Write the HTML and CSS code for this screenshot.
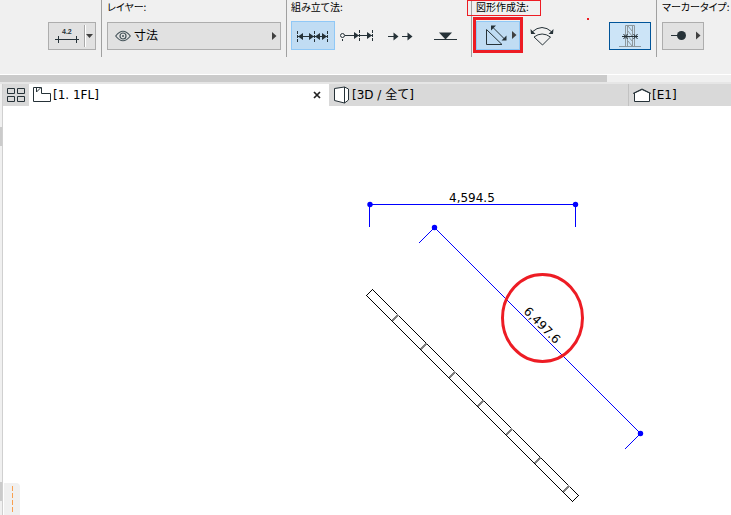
FILE: index.html
```html
<!DOCTYPE html>
<html lang="ja">
<head>
<meta charset="utf-8">
<meta name="viewport" content="width=device-width, initial-scale=1">
<title>寸法</title>
<link rel="stylesheet" href="styles.css">
</head>
<body>
<header class="infobox">
  <section class="group group-default">
    <div class="controls">
      <button class="btn btn-boxed btn-split" type="button" aria-label="寸法の設定">
        <svg width="46" height="26" viewBox="0 0 46 26">
          <text class="icon-text" x="13" y="11">4.2</text>
          <path class="ink" d="M6 16.500H30M9.500 13v7M27.500 13v7"/>
          <path d="M35.500 2v22" stroke="#a8a8a8"/><path d="M36.500 2v22" stroke="#fff"/>
          <path class="arrow" d="M37 11h7l-3.500 4z"/>
        </svg>
      </button>
    </div>
  </section>
  <section class="group group-layer">
    <label class="caption" for="layer">レイヤー:</label>
    <div class="controls">
      <div class="picker">
        <svg class="picker-eye" width="16" height="12" viewBox="0 0 16 12">
          <path d="M.7 6Q8-3.500 15.300 6Q8 15.500.7 6z" fill="none" stroke="#45545a" stroke-width="1.200"/>
          <circle cx="8" cy="6" r="3" fill="none" stroke="#45545a" stroke-width="1.200"/>
          <circle cx="8" cy="6" r="1" fill="#45545a"/>
        </svg>
        <select id="layer" class="picker-select"><option>寸法</option></select>
        <svg class="picker-arrow" width="5" height="8" viewBox="0 0 5 8"><path class="arrow" d="M0 0l4.500 4L0 8z"/></svg>
      </div>
    </div>
  </section>
  <section class="group group-build">
    <span class="caption">組み立て法:</span>
    <div class="controls">
      <button class="btn btn-on" type="button" aria-label="連続寸法">
        <svg width="42" height="28" viewBox="0 0 42 28">
          <path class="ink" d="M6 14.500H36"/>
          <path class="ink dash" d="M5.500 9v11M22.500 9v11M35.500 9v11"/>
          <path class="fill" d="M6 14.500l5-3.500v7zM22 14.500l-5-3.500v7zM23 14.500l5-3.500v7zM35 14.500l-5-3.500v7z"/>
        </svg>
      </button>
      <button class="btn" type="button" aria-label="累進寸法">
        <svg width="42" height="28" viewBox="0 0 42 28">
          <circle class="ink" cx="6.500" cy="13.500" r="2"/>
          <path class="ink" d="M9 13.500H36"/>
          <path class="ink dash" d="M6.500 17v2M23.500 8v11M36.500 8v11"/>
          <path class="fill" d="M23 13.500l-5-3.500v7zM36 13.500l-5-3.500v7z"/>
        </svg>
      </button>
      <button class="btn" type="button" aria-label="座標寸法">
        <svg width="42" height="28" viewBox="0 0 42 28">
          <path class="ink" d="M8 14.500h7M22 14.500h7"/>
          <path class="fill" d="M18.500 14.500l-5-4v8zM32.500 14.500l-5-4v8z"/>
        </svg>
      </button>
      <button class="btn" type="button" aria-label="高さ寸法">
        <svg width="42" height="28" viewBox="0 0 42 28">
          <path class="ink" d="M10 17.500h23"/><path class="fill" d="M15 10.500h13l-6.500 7z"/>
        </svg>
      </button>
    </div>
  </section>
  <section class="group group-geometry">
    <span class="caption caption-marked">図形作成法:</span>
    <div class="controls">
      <button class="btn btn-on btn-marked" type="button" aria-label="斜め寸法">
        <svg width="42" height="27" viewBox="0 0 42 27">
          <path class="ink" d="M9.500 7.500v15h15.500zM16 5.500l12 12"/>
          <path class="fill" d="M14 3.500h5l-5 5zM29.500 18.500h-5l5-5z"/>
          <path class="arrow" d="M35 9l4.500 4-4.500 4z"/>
        </svg>
      </button>
      <button class="btn" type="button" aria-label="円弧寸法">
        <svg width="42" height="28" viewBox="0 0 42 28">
          <path class="ink" d="M11 10q10-9 20 0M13 15q8-6 16.500 0L21.500 23z"/>
          <path class="fill" d="M9.500 7l.5 5h4.500zM32.500 7l-.5 5h-4.500z"/>
        </svg>
      </button>
      <button class="btn btn-static" type="button" aria-label="固定寸法">
        <svg width="40" height="26" viewBox="0 0 40 26">
          <path d="M9 23.500h22M15.500 23.500v-21h9v21M17.500 3v20M22.500 3v20" fill="none" stroke="#8d989e"/>
          <path d="M18 3l4 5M18 8l4 5M18 13l4 5M18 18l4 5" fill="none" stroke="#8d989e"/>
          <path class="ink" d="M12 13.500h16"/>
          <path class="ink" d="M13.500 11l4 5M13.500 16l4-5M23.500 11l4 5M23.500 16l4-5"/>
        </svg>
      </button>
    </div>
    <i class="speck"></i>
  </section>
  <section class="group group-marker">
    <span class="caption">マーカータイプ:</span>
    <div class="controls">
      <button class="btn btn-boxed" type="button" aria-label="マーカータイプ">
        <svg width="40" height="26" viewBox="0 0 40 26">
          <path class="ink" d="M8 12.500h10"/><circle class="fill" cx="18.500" cy="12.500" r="4.500"/>
          <path class="arrow" d="M33 8.500l4.500 4-4.500 4z"/>
        </svg>
      </button>
    </div>
  </section>
</header>
<div class="scroll"><div class="scroll-thumb"></div></div>
<main class="workspace">
  <aside class="rail"><i class="grip"></i><i class="grip"></i></aside>
  <div class="view">
    <nav class="tabs">
      <button class="overview" type="button" aria-label="タブ一覧">
        <svg width="18" height="14" viewBox="0 0 18 14"><path class="ink" d="M.5.5h7v5h-7zM10.500.5h7v5h-7zM.5 8.500h7v5h-7zM10.500 8.500h7v5h-7z"/></svg>
      </button>
      <div class="tab tab-active">
        <svg width="19" height="16" viewBox="0 0 19 16"><path class="ink" d="M.5.5h8v6h9v8H.5zM3.500 1v4l4-4"/></svg>
        <a class="tab-link" href="#floor">[1. 1FL]</a>
        <button class="close" type="button" aria-label="閉じる">
          <svg width="8" height="8" viewBox="0 0 8 8"><path d="M1 1l6 6M7 1L1 7" stroke="#222" stroke-width="1.700"/></svg>
        </button>
      </div>
      <div class="tab">
        <svg width="18" height="18" viewBox="0 0 18 18"><path d="M1 3l10-2 5 2v11l-5 3-10-3z" fill="#fff"/><path class="ink" d="M1.500 2.500L11.500 1v16l-10-2.500zM11.500 1l4 2v11l-4 3"/></svg>
        <a class="tab-link" href="#model">[3D / 全て]</a>
      </div>
      <div class="tab tab-last">
        <svg width="18" height="14" viewBox="0 0 18 14"><path class="ink" d="M1.500 5v8.500h15V5L9 1.500z" fill="#fff"/><path class="ink" d="M0 5.500L9 1l9 4.500"/></svg>
        <a class="tab-link" href="#elevation">[E1]</a>
      </div>
    </nav>
    <div class="canvas">
      <svg class="drawing" role="img" aria-label="図面">
        <g transform="translate(-3 -106)">
          <g class="wall">
            <path d="M372.500 289.500L366.500 295.500L572.500 501.500L578.500 495.500z"/>
            <path class="joint" d="M392 321l6-6M420.500 349.500l6-6M449 378l6-6M477.500 406.500l6-6M506 435l6-6M534.500 463.500l6-6M563 492l6-6"/>
          </g>
          <g class="dimension">
            <path d="M370 204.500H576M369.500 204v23M575.500 204v23"/>
            <path d="M419 243l15.500-15.500L640.500 433.500L625 449"/>
          </g>
          <g class="nodes">
            <circle cx="370" cy="204.500" r="2.700"/><circle cx="575.500" cy="204.500" r="2.700"/>
            <circle cx="434.500" cy="227.500" r="2.700"/><circle cx="640.500" cy="433.500" r="2.700"/>
          </g>
          <text class="measure" x="449" y="202">4,594.5</text>
          <text class="measure" transform="translate(523 312) rotate(45)">6,497.6</text>
          <ellipse class="ring" cx="542.500" cy="318" rx="40" ry="43.500"/>
        </g>
      </svg>
      <div class="palette"><i class="dash-mark"></i><i class="dash-mark"></i><i class="dash-mark"></i><i class="dash-mark"></i></div>
    </div>
  </div>
</main>
</body>
</html>
```
FILE: styles.css
```css
* { box-sizing: border-box; }
html, body { height: 100%; margin: 0; }
body {
  display: flex;
  flex-direction: column;
  overflow: hidden;
  background: #f0f0f0;
  color: #000;
  font-family: "DejaVu Sans", "Noto Sans CJK JP", sans-serif;
  font-size: 12px;
}
button { padding: 0; border: 0; background: none; font: inherit; }
svg { display: block; flex: none; }

.ink { fill: none; stroke: #263238; }
path.ink[fill] { fill: #fff; }
.dash { stroke-dasharray: 3 1; }
.fill { fill: #263238; }
.arrow { fill: #404040; }
.icon-text { font: bold 7px "Liberation Sans", sans-serif; fill: #263238; }

/* Info box */
.infobox { display: flex; padding-bottom: 17px; border-bottom: 1px solid #fff; }
.group {
  position: relative;
  display: flex;
  flex: none;
  flex-direction: column;
  justify-content: flex-end;
  height: 57px;
  padding: 0 5px 7px;
  border-right: 1px solid #a0a0a0;
}
.group-default { padding-left: 48px; }
.group-layer { width: 185px; }
.group-build { padding-left: 4px; padding-right: 4px; }
.group-geometry { width: 185px; padding-left: 4px; }
.group-marker { flex: 1; min-width: 0; padding-right: 0; border-right: 0; }
.caption {
  position: relative;
  height: 14px;
  margin-bottom: auto;
  font: 10px/14px "Noto Sans CJK JP", sans-serif;
  font-feature-settings: "palt";
  white-space: nowrap;
}
.caption-marked::after {
  content: "";
  position: absolute;
  left: -9px;
  top: 0;
  width: 72px;
  height: 14px;
  border: 1px solid #ed1c24;
}
.controls { display: flex; align-items: flex-end; }
.btn {
  display: grid;
  place-items: center;
  width: 44px;
  height: 29px;
}
.btn-boxed { width: 42px; height: 28px; border: 1px solid #adadad; background: #e1e1e1; }
.btn-split { width: 48px; }
.btn-on { border: 1px solid #90c8f6; background: #c0dcf3; }
.btn-marked { position: relative; }
.btn-marked::after {
  content: "";
  position: absolute;
  inset: -5px -4px -4px;
  border: 3px solid #ed1c24;
}
.btn-static { width: 42px; height: 28px; margin-left: auto; border: 1px solid #005499; background: #cce4f7; }
.speck { position: absolute; right: 67px; top: 18px; width: 2px; height: 2px; background: #ed1c24; }

.picker {
  display: flex;
  align-items: center;
  width: 100%;
  height: 28px;
  padding: 0 3px 0 7px;
  border: 1px solid #adadad;
  background: #e1e1e1;
}
.picker-select {
  flex: 1;
  min-width: 0;
  height: 26px;
  padding: 0 3px;
  border: 0;
  appearance: none;
  background: none;
  color: inherit;
  font: inherit;
}

.scroll { height: 9px; border-bottom: 2px solid #e6e6e6; }
.scroll-thumb { width: 83%; height: 7px; background: #cbcbcb; }

/* Workspace */
.workspace { display: flex; flex: 1; min-height: 0; }
.rail {
  display: flex;
  flex-direction: column;
  justify-content: space-between;
  width: 3px;
  padding: 43px 0 14px;
  border-right: 1px solid #d0d0d0;
}
.grip { width: 2px; height: 19px; background: #cbcbcb; }
.view { display: flex; flex: 1; flex-direction: column; min-width: 0; }
.tabs { display: grid; grid-template-columns: 26px 300px 300px 1fr; height: 22px; background: #d9d9d9; }
.overview { display: grid; place-items: center; }
.tab { display: flex; align-items: center; gap: 1px; padding: 0 8px 0 4px; border-right: 1px solid #c2c2c2; }
.tab-active { border-right: 0; background: #fff; }
.tab-last { border-right: 0; }
.tab-link { color: inherit; line-height: 20px; text-decoration: none; white-space: nowrap; }
.close { margin-left: auto; }

.canvas { position: relative; flex: 1; min-height: 0; background: #fff; }
.drawing { width: 100%; height: 100%; }
.wall { fill: none; stroke: #000; shape-rendering: crispEdges; }
.joint { stroke: #808080; stroke-width: 2; }
.dimension { fill: none; stroke: #00f; shape-rendering: crispEdges; }
.nodes { fill: #00f; }
.measure { font-size: 12px; fill: #000; }
.ring { fill: none; stroke: #ed1c24; stroke-width: 3; }
.palette {
  position: absolute;
  left: 1px;
  bottom: 0;
  display: grid;
  justify-content: center;
  gap: 2px;
  padding: 3px 0;
  width: 16px;
  border-top-right-radius: 4px;
  background: #f0f0f0;
}
.dash-mark { width: 1px; height: 5px; background: #f9a050; }
```
